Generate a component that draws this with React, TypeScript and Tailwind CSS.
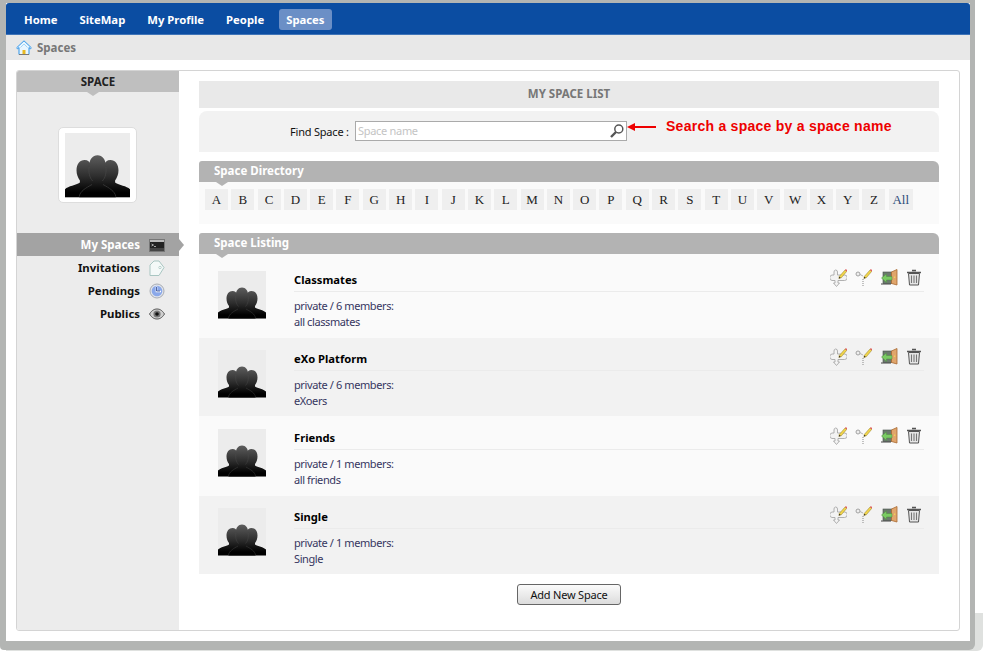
const navItems = ["Home", "SiteMap", "My Profile", "People", "Spaces"];
const letters = "ABCDEFGHIJKLMNOPQRSTUVWXYZ".split("");

const spaces = [
  { name: "Classmates", members: 6, note: "all classmates", bg: "bg-[#fafafa]", pad: "pt-[17px] pb-[8px]" },
  { name: "eXo Platform", members: 6, note: "eXoers", bg: "bg-[#f2f2f2]", pad: "pt-[12px] pb-[7px]" },
  { name: "Friends", members: 1, note: "all friends", bg: "bg-[#fafafa]", pad: "pt-[13px] pb-[8px]" },
  { name: "Single", members: 1, note: "Single", bg: "bg-[#f2f2f2]", pad: "pt-[12px] pb-[7px]" },
];

function Silhouette({ id }: { id: string }) {
  return (
    <svg viewBox="0 0 48 48" className="block w-full h-full">
      <defs>
        <linearGradient id={id} x1="0" y1="17" x2="0" y2="44" gradientUnits="userSpaceOnUse">
          <stop offset="0" stopColor="#5c5c5c" />
          <stop offset="0.55" stopColor="#2e2e2e" />
          <stop offset="1" stopColor="#000000" />
        </linearGradient>
      </defs>
      <rect width="48" height="48" fill="#ececec" />
      <g fill={`url(#${id})`}>
        <path d="M14.500 20C11 20 8.500 23 8.500 27.500c0 3 1 5.500 2.500 7.500v1.500C8 38.500 2.500 39 0 41.500V47.500H48V41.500C45.500 39 40 38.500 37 36.500V35c1.500-2 2.500-4.500 2.500-7.500C39.500 23 37 20 33.500 20 31 20 29.500 21.500 28.500 24h-9C18.500 21.500 17 20 14.500 20z" />
        <path d="M24 16.500c-3.600 0-6.200 3.200-6.200 8 0 3.500 1.200 6.500 2.700 8.500v2.500C18 37.500 13 38.500 10.500 42V47.500H37.500V42C35 38.500 30 37.500 27.500 35.500V33c1.500-2 2.700-5 2.700-8.500 0-4.800-2.600-8-6.200-8z" />
      </g>
      <path d="M10.500 47c.5-4 5-6.500 9.500-9M37.500 47c-.5-4-5-6.500-9.500-9M17.800 25c-.5 4 .2 8 2.700 10.500M30.200 25c.5 4-.2 8-2.700 10.500" fill="none" stroke="#4f4f4f" strokeWidth="0.400" />
    </svg>
  );
}

function HomeIcon() {
  return (
    <svg viewBox="0 0 16 16" className="w-4 h-4 shrink-0">
      <path d="M8 .8 .6 7.800l1 1 1.400-1.300v7h10v-7l1.400 1.300 1-1z" fill="#eaf6ff" stroke="#2f95ea" strokeWidth="1" strokeLinejoin="round" />
      <path d="M4.500 7.500 8 4l3.500 3.500" fill="none" stroke="#a6d6f7" strokeWidth="1" />
      <rect x="6.500" y="10" width="3" height="4.500" fill="#e8b923" />
      <path d="M3 14.500h10" stroke="#777" strokeWidth="1" />
    </svg>
  );
}

function TerminalIcon() {
  return (
    <svg viewBox="0 0 16 13" className="w-4 h-[13px]">
      <rect x="0.500" y="0.500" width="15" height="12" fill="#222" stroke="#777" />
      <rect x="1" y="1" width="14" height="2" fill="#bbb" />
      <path d="M2.500 5l2 1-2 1M5 7.500h2" fill="none" stroke="#ddd" strokeWidth="0.700" />
      <rect x="1" y="9" width="14" height="3" fill="#444" />
    </svg>
  );
}

function TagIcon() {
  return (
    <svg viewBox="0 0 16 17" className="w-4 h-[17px]">
      <path d="M1 5 5 1h5l5 6.500L10 15.500H1z" fill="#f4f9f8" stroke="#a9c6c2" strokeWidth="1" strokeLinejoin="miter" />
      <circle cx="11" cy="7.500" r="1.200" fill="#fff" stroke="#a9c6c2" strokeWidth="0.800" />
    </svg>
  );
}

function ClockIcon() {
  return (
    <svg viewBox="0 0 16 16" className="w-4 h-4">
      <circle cx="8" cy="8" r="7" fill="#dfe3ea" stroke="#a9adb5" />
      <circle cx="8" cy="8" r="5.300" fill="#8aa8ea" />
      <path d="M7.500 3.500V8.500H12" fill="none" stroke="#fff" strokeWidth="1.600" />
      <path d="M7.500 4V8H11" fill="none" stroke="#26408a" strokeWidth="0.800" />
    </svg>
  );
}

function EyeIcon() {
  return (
    <svg viewBox="0 0 16 12" className="w-4 h-3">
      <path d="M.5 6C3 2 5.500 1 8 1s5 1 7.500 5C13 10 10.500 11 8 11S3 10 .5 6z" fill="#cfcfcf" stroke="#555" strokeWidth="1" />
      <circle cx="8" cy="6" r="3.600" fill="#777" />
      <circle cx="8" cy="6" r="1.800" fill="#111" />
    </svg>
  );
}

function Pencil() {
  return (
    <g transform="translate(6.500 -1) scale(0.680)">
      <path d="M4 12.500 12.500 3l2.500 2-8 9.500-3.500 1z" fill="#f2d64b" stroke="#8a7420" strokeWidth="0.700" />
      <path d="M12.500 3l1.200-1.500 2.300 2L15 5z" fill="#e2595c" />
      <path d="M3.500 15.500l.7-2.700 2 1.700z" fill="#222" />
    </g>
  );
}

function EditNodeIcon() {
  return (
    <svg viewBox="0 0 17 18" className="w-[17px] h-[18px]">
      <path
        d="M5.500 1a2 2 0 0 1 2 2V6h7a1.500 1.500 0 0 1 0 5.500H8V14h1.500l-3 3.500-3-3.500H5v-2.500H2A2.800 2.800 0 0 1 2 6h2V3a2 2 0 0 1 1.500-2z"
        fill="#f3f3f3"
        stroke="#a8a8a8"
        strokeWidth="0.900"
      />
      <Pencil />
    </svg>
  );
}

function EditKeyIcon() {
  return (
    <svg viewBox="0 0 17 18" className="w-[17px] h-[18px]">
      <circle cx="3" cy="5" r="2" fill="#eee" stroke="#999" strokeWidth="0.900" />
      <path d="M5 5.500l3 1.500" stroke="#aaa" strokeWidth="0.900" />
      <path d="M8 10v7" stroke="#888" strokeWidth="1" strokeDasharray="1 1" />
      <Pencil />
    </svg>
  );
}

function DoorIcon() {
  return (
    <svg viewBox="0 0 17 17" className="w-[17px] h-[17px]">
      <rect x="2" y="3" width="9" height="11.500" fill="#6b7a6d" stroke="#47524a" strokeWidth="0.600" />
      <path d="M10.500 3 16 .5v15.500l-5.500-1.500z" fill="#e0a56b" stroke="#a86a32" strokeWidth="0.800" />
      <rect x="13.200" y="7.500" width="1" height="1.500" fill="#f5dd55" />
      <path d="M.5 9 5.500 5v2.500h5.500v3.500H5.500v2.500z" fill="#7acb63" stroke="#4f8f41" strokeWidth="0.500" />
      <path d="M0 15h10" stroke="#444" strokeWidth="1" />
    </svg>
  );
}

function TrashIcon() {
  return (
    <svg viewBox="0 0 16 17" className="w-4 h-[17px]">
      <path d="M6 1.500h4M1 3.500h14" stroke="#555" strokeWidth="1.300" fill="none" />
      <path d="M2.500 4.500h11l-1 11.500h-9z" fill="#e6e6e6" stroke="#555" strokeWidth="1" />
      <path d="M5.500 6.500v7.500M8 6.500v7.500M10.500 6.500v7.500" stroke="#777" strokeWidth="1.100" />
    </svg>
  );
}

function SearchIcon() {
  return (
    <svg viewBox="0 0 16 16" className="w-4 h-4">
      <circle cx="9.800" cy="6" r="4" fill="#fff" stroke="#555" strokeWidth="1.500" />
      <path d="M7 9 2 14" stroke="#555" strokeWidth="2.400" />
    </svg>
  );
}

function Notch({ color, left }: { color: string; left: string }) {
  return (
    <span
      className={`absolute top-full ${left} w-0 h-0 border-x-[6px] border-x-transparent border-t-[4px] ${color}`}
    />
  );
}

function SectionHeader({ title }: { title: string }) {
  return (
    <div className="relative h-[21px] rounded-tr-md rounded-tl-[3px] bg-[#b3b3b3] pl-[15px] text-[11.5px] leading-[20px] font-bold text-white">
      {title}
      <Notch color="border-t-[#b3b3b3]" left="left-[17px]" />
    </div>
  );
}

function Sidebar() {
  const links = [
    { label: "Invitations", icon: <TagIcon /> },
    { label: "Pendings", icon: <ClockIcon /> },
    { label: "Publics", icon: <EyeIcon /> },
  ];
  return (
    <aside className="w-[162px] shrink-0 bg-[#ececec]">
      <div className="relative h-[21px] bg-[#bfbfbf] text-center text-[11.5px] leading-[21px] font-bold text-[#222]">
        SPACE
        <Notch color="border-t-[#bfbfbf]" left="left-[70px]" />
      </div>
      <div className="mt-[35px] ml-[41px] w-[79px] h-[76px] rounded-[5px] border border-[#dddddd] bg-white px-[6px] pt-[5px]">
        <div className="w-[65px] h-[65px]">
          <Silhouette id="side-avatar" />
        </div>
      </div>
      <div className="mt-[30px]">
        <div className="relative flex h-[23px] items-center justify-end gap-[9px] bg-[#a3a3a3] pt-[1px] pr-[14px] text-[11.5px] font-bold text-white">
          My Spaces
          <TerminalIcon />
          <span className="absolute left-full top-[6px] w-0 h-0 border-y-[6px] border-y-transparent border-l-[5px] border-l-[#a3a3a3]" />
        </div>
        {links.map((link) => (
          <div
            key={link.label}
            className="flex h-[23px] items-center justify-end gap-[9px] pt-[1px] pr-[14px] text-[11.4px] font-bold text-[#111]"
          >
            {link.label}
            <span className="flex w-4 justify-center">{link.icon}</span>
          </div>
        ))}
      </div>
    </aside>
  );
}

function SearchBox() {
  return (
    <div className="mt-[3px] flex h-[41px] rounded-t-lg bg-[#f2f2f2] pt-[10px] pl-[91px]">
      <span className="w-[60px] pt-[2px] text-[11px] leading-[18px] tracking-[-0.2px] whitespace-nowrap text-[#111]">Find Space :</span>
      <div className="ml-[5px] flex h-[20px] w-[272px] items-center justify-between border border-[#aaaaaa] bg-white pl-[2px] pr-[1px] text-[11px] tracking-[-0.3px] text-[#c4c4c4]">
        Space name
        <SearchIcon />
      </div>
      <svg viewBox="0 0 30 8" className="mt-[2px] h-2 w-[30px] shrink-0">
        <path d="M0 4 8 0v3h21v2H8v3z" fill="#ee0000" />
      </svg>
      <span className="ml-[9px] -mt-[4px] font-['Liberation_Sans'] text-[14px] leading-[18px] tracking-[0.26px] font-bold whitespace-nowrap text-[#ee0000]">
        Search a space by a space name
      </span>
    </div>
  );
}

function Directory() {
  return (
    <div className="mt-[9px]">
      <SectionHeader title="Space Directory" />
      <div className="flex h-[42px] gap-[3.300px] bg-[#fafafa] pl-[6px] pt-[7px]">
        {letters.map((letter) => (
          <span
            key={letter}
            className="h-[21px] w-[23px] bg-[#efefef] text-center font-['Liberation_Serif'] text-[13px] leading-[21px] text-[#222]"
          >
            {letter}
          </span>
        ))}
        <span className="h-[21px] w-[24px] bg-[#efefef] text-center font-['Liberation_Serif'] text-[13px] leading-[21px] text-[#2c4a78]">
          All
        </span>
      </div>
    </div>
  );
}

function SpaceRow({ space, index }: { space: (typeof spaces)[number]; index: number }) {
  return (
    <div className={`flex pl-[19px] pr-[15px] ${space.bg} ${space.pad}`}>
      <div className="w-[48px] h-[48px] shrink-0">
        <Silhouette id={`row-avatar-${index}`} />
      </div>
      <div className="ml-[28px] flex-1">
        <div className="flex h-[21px] items-center justify-between border-b border-[#ebebeb] text-[11.2px] font-bold text-black">
          <span className="-mt-[2px]">{space.name}</span>
          <div className="-mt-[7px] flex items-center gap-[8.300px] pr-[2px]">
            <EditNodeIcon />
            <EditKeyIcon />
            <DoorIcon />
            <TrashIcon />
          </div>
        </div>
        <div className="pt-[6px] text-[11px] leading-4 tracking-[-0.4px] text-[#36365f]">
          <div>
            private / {space.members} members:
          </div>
          <div>{space.note}</div>
        </div>
      </div>
    </div>
  );
}

export default function App() {
  return (
    <div className="relative h-[651px] w-[990px] overflow-hidden bg-white font-['Noto_Sans',sans-serif]">
      <div className="absolute right-[7px] bottom-0 h-[38px] w-[20px] rounded-br-md bg-[#dfe1df]" />
      <div className="absolute bottom-0 left-[6px] h-[2px] w-[970px] bg-[#dfe1df]" />
      <div className="relative h-[650px] w-[975px] rounded-br-md rounded-bl-sm bg-[#b3b5b3] pt-[3px] pr-[5px] pb-[9px] pl-[6px]">
        <div className="flex h-full flex-col bg-white">
          <nav className="flex h-[32px] items-start gap-2 rounded-t-[3px] border-b border-[#3f74b8] bg-[#0b4da2] pt-[6px] pl-[11px] text-[11.3px] font-bold text-white">
            {navItems.map((item) => (
              <span
                key={item}
                className={`h-[21px] rounded-[3px] px-[7px] leading-[21px] ${item === "Spaces" ? "bg-[#6b8fc6]" : ""}`}
              >
                {item}
              </span>
            ))}
          </nav>
          <div className="flex h-[25px] items-center gap-[5px] bg-[#e8e8e8] pl-[10px] text-[11.5px] font-bold text-[#777]">
            <HomeIcon />
            Spaces
          </div>
          <main className="mx-[10px] mt-[10px] flex h-[561px] overflow-hidden rounded-[3px] border border-[#d4d4d4] bg-white">
            <Sidebar />
            <section className="w-[740px] ml-[20px] pt-[10px]">
              <div className="h-[27px] bg-[#e9e9e9] text-center text-[11.5px] leading-[25px] font-bold text-[#777]">
                MY SPACE LIST
              </div>
              <SearchBox />
              <Directory />
              <div className="mt-[9px]">
                <SectionHeader title="Space Listing" />
                {spaces.map((space, index) => (
                  <SpaceRow key={space.name} space={space} index={index} />
                ))}
              </div>
              <div className="mt-[10px] flex justify-center">
                <button className="h-[21px] w-[104px] rounded-[3px] border border-[#666] bg-gradient-to-b from-[#fbfbfb] to-[#dcdcdc] text-[11px] leading-[18px] tracking-[-0.2px] text-[#111]">
                  Add New Space
                </button>
              </div>
            </section>
          </main>
        </div>
      </div>
    </div>
  );
}
